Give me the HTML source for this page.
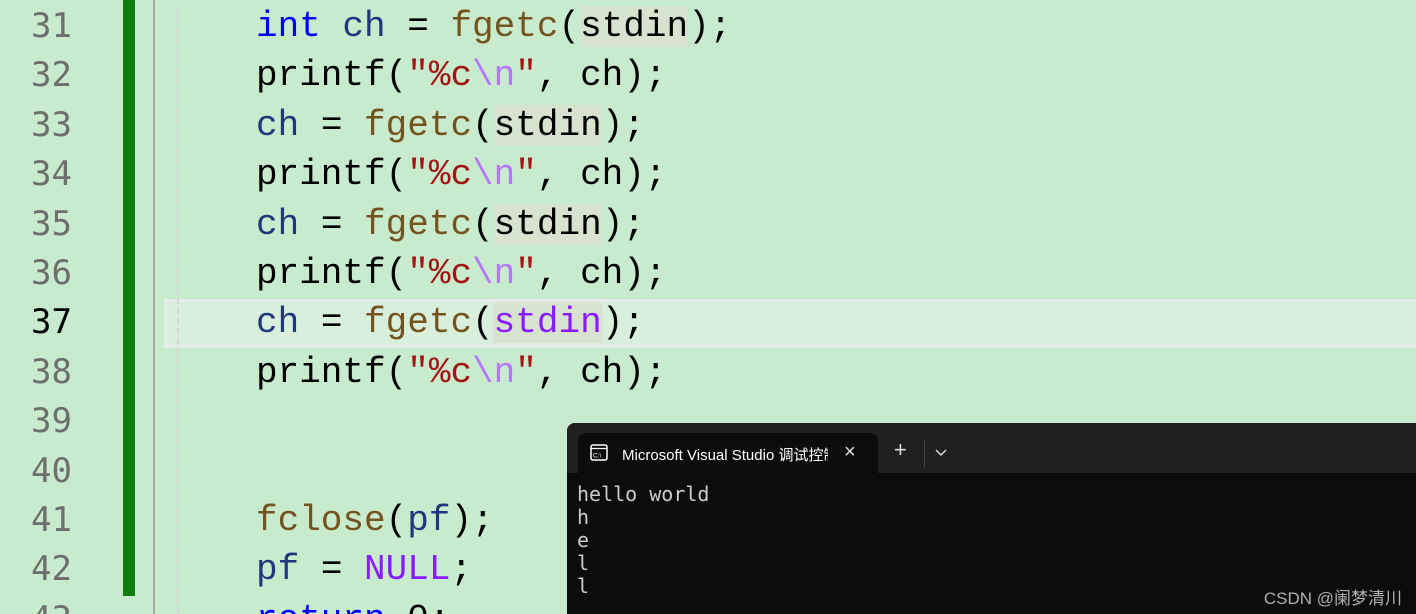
<!DOCTYPE html>
<html style="overflow:hidden;height:614px"><head><meta charset="utf-8"><style>
body{margin:0;width:1416px;height:614px;overflow:hidden;background:#c7ebcc;position:relative;font-family:"DejaVu Sans Mono",monospace}
.ln{position:absolute;left:0;width:72px;text-align:right;font-size:34px;color:#6e6e6e;font-family:"DejaVu Sans Mono","Liberation Sans",sans-serif;height:49.4px;line-height:49.4px}
.code{position:absolute;left:256px;font-size:36px;height:49.4px;line-height:49.4px;white-space:pre;color:#000;font-family:"Liberation Mono",monospace}
.k{color:#0000ff}.v{color:#1f377f}.f{color:#74531f}.s{color:#a31515}.e{color:#b776fb}.m{color:#8a1bff}
.hl{background:#d7e3cf}
#bar{position:absolute;left:123px;top:0;width:12px;height:596px;background:#107c10}
#gl{position:absolute;left:153px;top:0;width:2px;height:614px;background:#a8a8a8}
#dg{position:absolute;left:177px;top:8px;width:0;height:606px;border-left:2px dashed #d6d6d6}
#cur{position:absolute;left:164px;top:299px;width:1260px;height:43px;background:#d8f0db;border:3px solid #e6ece8}
#term{position:absolute;left:567px;top:423px;width:849px;height:191px;background:#0c0c0c;border-radius:8px 0 0 0;overflow:hidden}
#tb{position:absolute;left:0;top:0;width:100%;height:50px;background:#202020}
#tab{position:absolute;left:11px;top:10px;width:300px;height:40px;background:#0c0c0c;border-radius:8px 8px 0 0;color:#fff;font-family:"Liberation Sans","Noto Sans CJK SC",sans-serif;font-size:15px}
.out{position:absolute;left:10px;top:60px;color:#cccccc;font-size:20px;line-height:23px;white-space:pre;font-family:"DejaVu Sans Mono","Liberation Mono",monospace}
#wm{position:absolute;right:14px;top:584px;color:#b0b0b0;font-family:"Liberation Sans","Noto Sans CJK SC",sans-serif;font-size:17px}
</style></head><body>
<div id="cur"></div>
<div id="bar"></div><div id="gl"></div><div id="dg"></div>
<div class="ln" style="top:2px">31</div>
<div class="ln" style="top:51.4px">32</div>
<div class="ln" style="top:100.8px">33</div>
<div class="ln" style="top:150.2px">34</div>
<div class="ln" style="top:199.6px">35</div>
<div class="ln" style="top:249px">36</div>
<div class="ln" style="top:298.4px;color:#000">37</div>
<div class="ln" style="top:347.8px">38</div>
<div class="ln" style="top:397.2px">39</div>
<div class="ln" style="top:446.6px">40</div>
<div class="ln" style="top:496px">41</div>
<div class="ln" style="top:545.4px">42</div>
<div class="ln" style="top:594.8px">43</div>
<div class="code" style="top:2px"><span class="k">int</span> <span class="v">ch</span> = <span class="f">fgetc</span>(<span class="hl">stdin</span>);</div>
<div class="code" style="top:51.4px">printf(<span class="s">"%c</span><span class="e">\n</span><span class="s">"</span>, ch);</div>
<div class="code" style="top:100.8px"><span class="v">ch</span> = <span class="f">fgetc</span>(<span class="hl">stdin</span>);</div>
<div class="code" style="top:150.2px">printf(<span class="s">"%c</span><span class="e">\n</span><span class="s">"</span>, ch);</div>
<div class="code" style="top:199.6px"><span class="v">ch</span> = <span class="f">fgetc</span>(<span class="hl">stdin</span>);</div>
<div class="code" style="top:249px">printf(<span class="s">"%c</span><span class="e">\n</span><span class="s">"</span>, ch);</div>
<div class="code" style="top:298.4px"><span class="v">ch</span> = <span class="f">fgetc</span>(<span class="hl m">stdin</span>);</div>
<div class="code" style="top:347.8px">printf(<span class="s">"%c</span><span class="e">\n</span><span class="s">"</span>, ch);</div>
<div class="code" style="top:496px"><span class="f">fclose</span>(<span class="v">pf</span>);</div>
<div class="code" style="top:545.4px"><span class="v">pf</span> = <span class="m">NULL</span>;</div>
<div class="code" style="top:594.8px"><span class="k">return</span> 0;</div>
<div id="term">
<div id="tb"></div>
<div id="tab">
<svg style="position:absolute;left:12px;top:11px" width="18" height="17" viewBox="0 0 18 17"><rect x="1" y="1" width="16" height="15" rx="2" fill="none" stroke="#fff" stroke-width="1.5"/><line x1="1" y1="4.5" x2="17" y2="4.5" stroke="#fff" stroke-width="1.2"/><text x="3" y="13.5" font-size="6.5" fill="#fff" font-family="Liberation Sans">C:\</text></svg>
<span style="position:absolute;left:44px;top:11px;white-space:nowrap;width:206px;overflow:hidden">Microsoft Visual Studio 调试控制台</span>
<span style="position:absolute;left:266px;top:8px;font-size:20px;color:#ddd">×</span>
</div>
<div style="position:absolute;left:327px;top:14px;color:#ddd;font-size:22px;font-family:'Liberation Sans',sans-serif">+</div>
<div style="position:absolute;left:357px;top:17px;width:1px;height:28px;background:#444"></div>
<svg style="position:absolute;left:368px;top:26px" width="12" height="8" viewBox="0 0 12 8"><polyline points="1,1 6,6 11,1" fill="none" stroke="#ddd" stroke-width="1.4"/></svg>
<div class="out">hello world
h
e
l
l</div>
</div>
<div id="wm">CSDN @阑梦清川</div>
</body></html>
